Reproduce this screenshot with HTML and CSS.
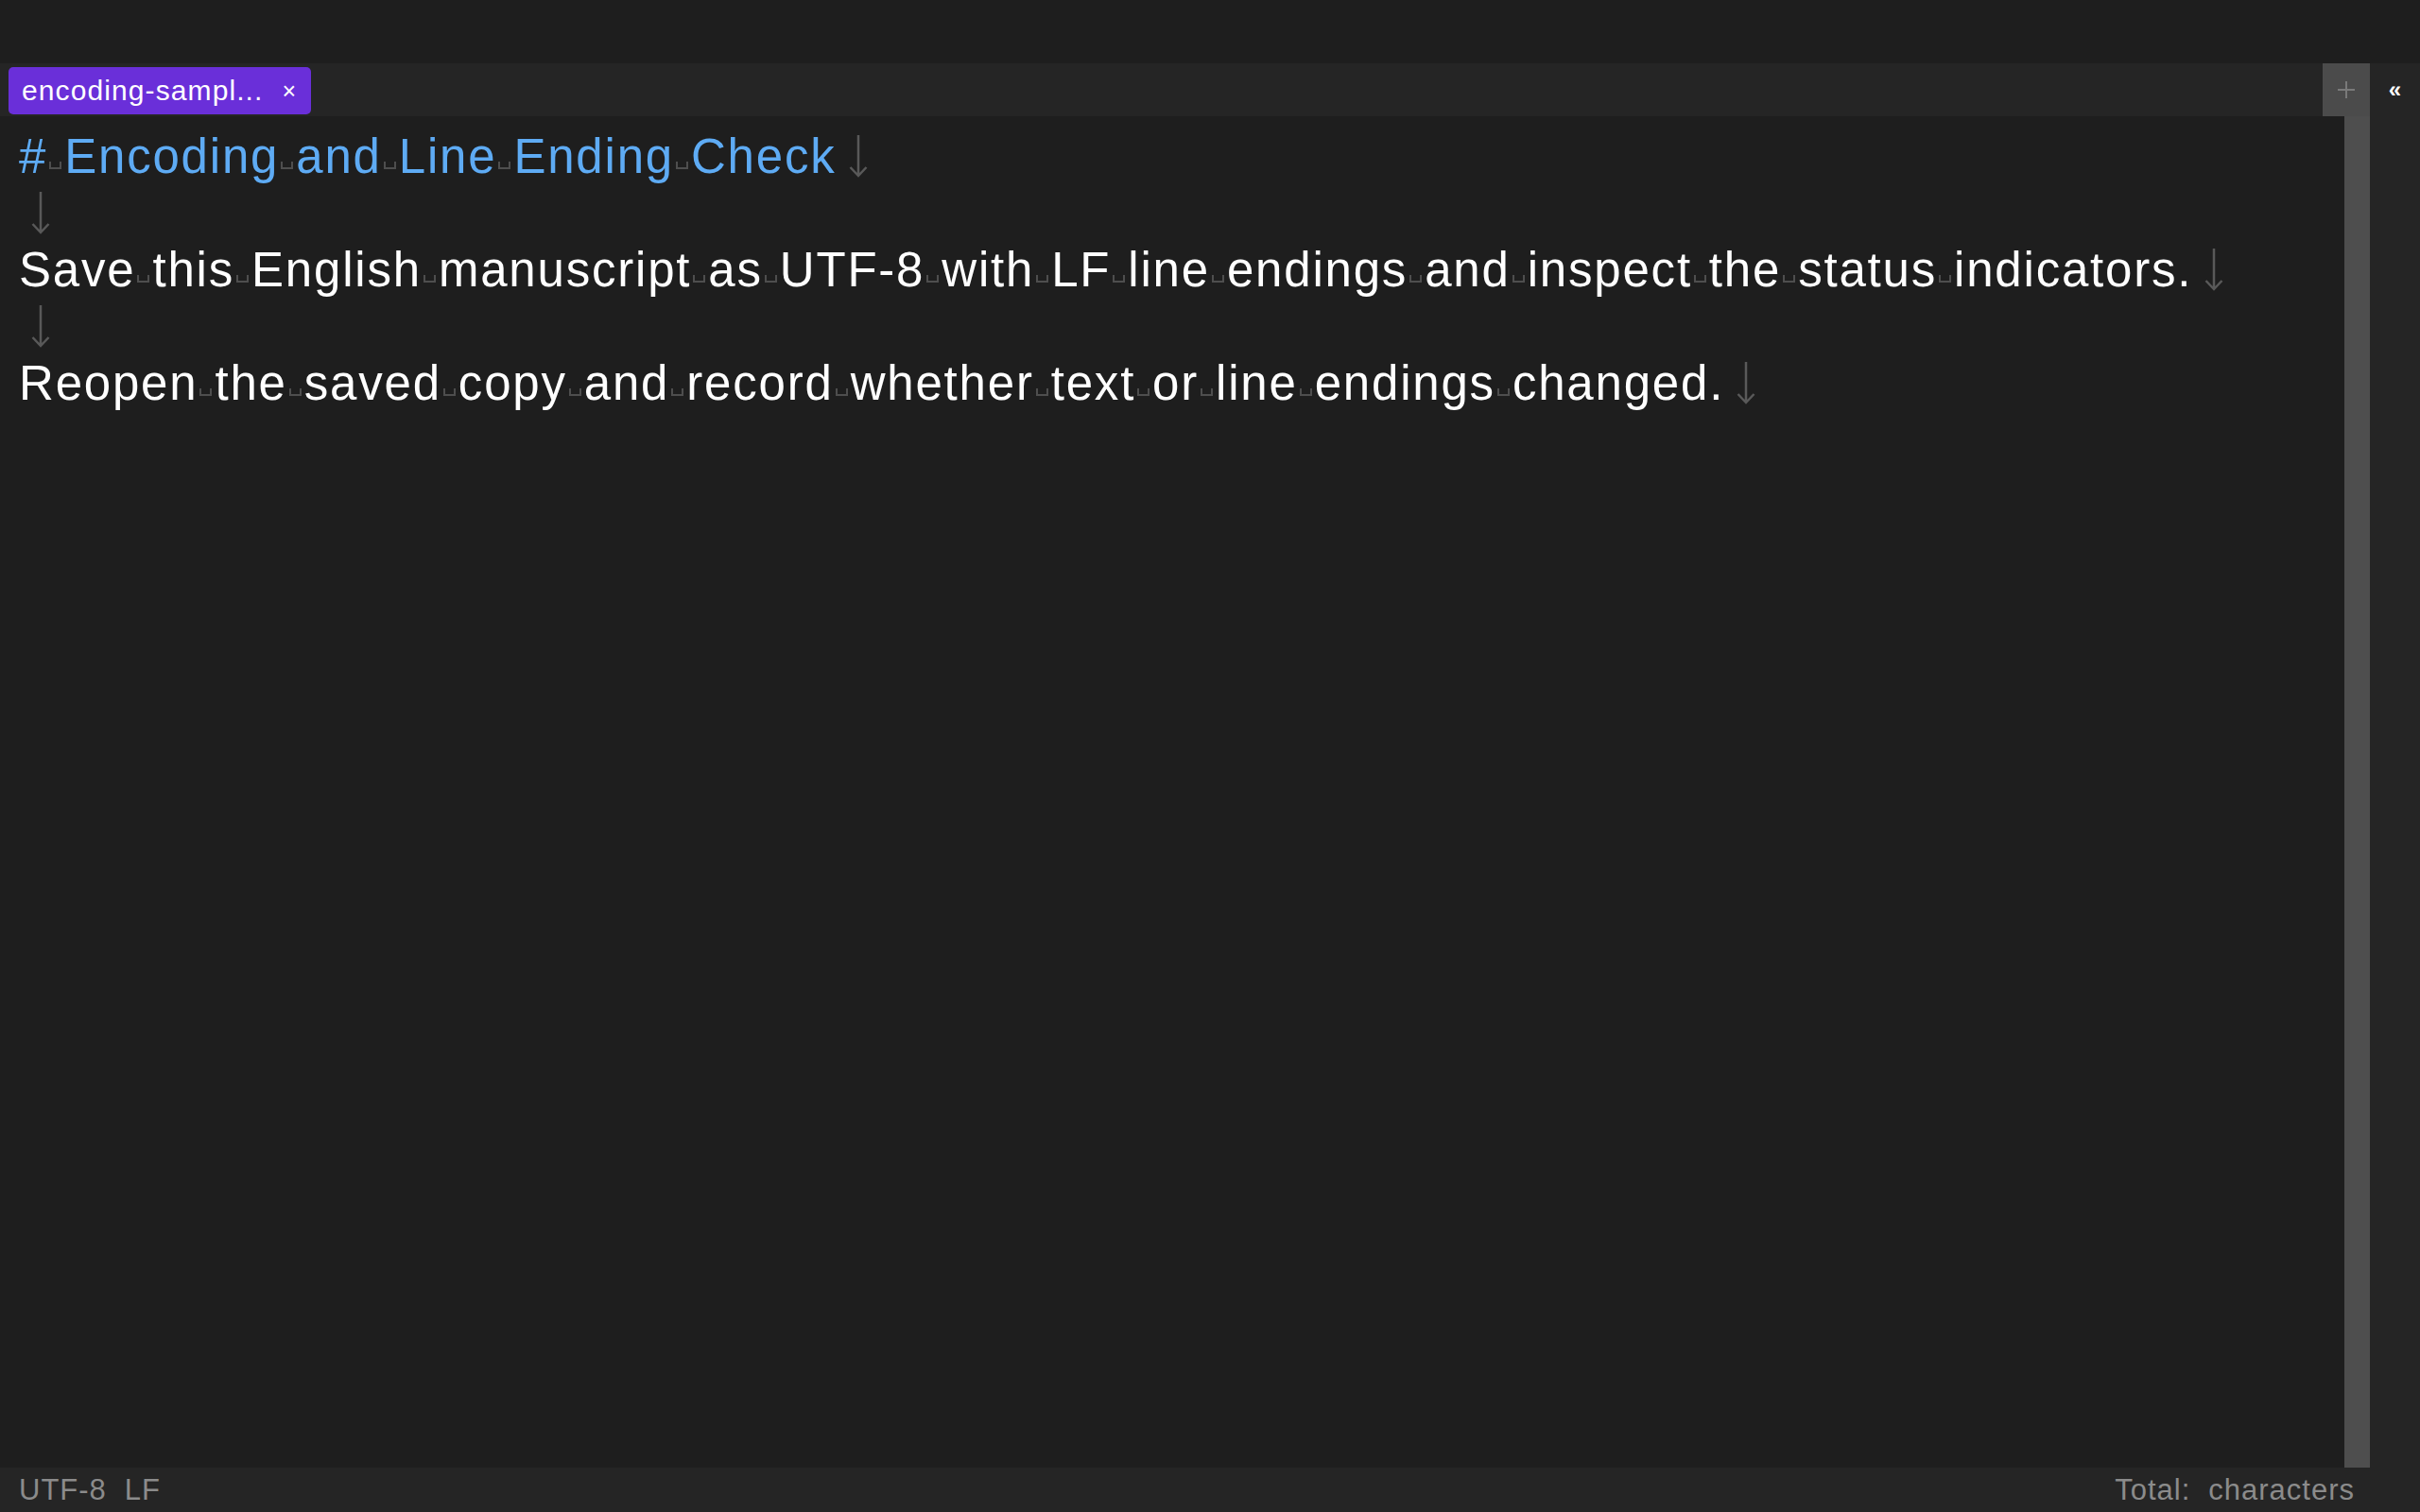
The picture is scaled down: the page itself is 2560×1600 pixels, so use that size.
FILE: index.html
```html
<!DOCTYPE html>
<html lang="en">
<head>
<meta charset="utf-8">
<title>encoding-sample</title>
<link rel="stylesheet" href="styles.css">
</head>
<body>
<div class="app">
  <div class="titlebar"></div>
  <div class="workspace">
    <div class="main">
      <div class="tabbar">
        <div class="tab">
          <span class="tab-title">encoding-sampl...</span>
          <span class="tab-close">×</span>
        </div>
        <div class="tab-add">
          <svg width="20" height="20" viewBox="0 0 20 20"><path d="M10 1V19M1 10H19" stroke="#7a7a7a" stroke-width="2" fill="none"/></svg>
        </div>
      </div>
      <div class="body">
        <div class="editor">
          <div class="line heading">#<span class="sp"></span>Encoding<span class="sp"></span>and<span class="sp"></span>Line<span class="sp"></span>Ending<span class="sp"></span>Check<svg class="nl" viewBox="0 0 22 46"><path d="M11 1V44M2.5 35L11 44L19.5 35"/></svg></div>
          <div class="line"><svg class="nl" viewBox="0 0 22 46"><path d="M11 1V44M2.5 35L11 44L19.5 35"/></svg></div>
          <div class="line">Save<span class="sp"></span>this<span class="sp"></span>English<span class="sp"></span>manuscript<span class="sp"></span>as<span class="sp"></span>UTF-8<span class="sp"></span>with<span class="sp"></span>LF<span class="sp"></span>line<span class="sp"></span>endings<span class="sp"></span>and<span class="sp"></span>inspect<span class="sp"></span>the<span class="sp"></span>status<span class="sp"></span>indicators.<svg class="nl" viewBox="0 0 22 46"><path d="M11 1V44M2.5 35L11 44L19.5 35"/></svg></div>
          <div class="line"><svg class="nl" viewBox="0 0 22 46"><path d="M11 1V44M2.5 35L11 44L19.5 35"/></svg></div>
          <div class="line">Reopen<span class="sp"></span>the<span class="sp"></span>saved<span class="sp"></span>copy<span class="sp"></span>and<span class="sp"></span>record<span class="sp"></span>whether<span class="sp"></span>text<span class="sp"></span>or<span class="sp"></span>line<span class="sp"></span>endings<span class="sp"></span>changed.<svg class="nl" viewBox="0 0 22 46"><path d="M11 1V44M2.5 35L11 44L19.5 35"/></svg></div>
        </div>
        <div class="scrollbar"></div>
      </div>
      <div class="statusbar">
        <div class="status-group">
          <span>UTF-8</span>
          <span>LF</span>
        </div>
        <div class="status-group">
          <span>Total:</span>
          <span>characters</span>
        </div>
      </div>
    </div>
    <div class="sidepanel">
      <div class="side-head">«</div>
    </div>
  </div>
</div>
</body>
</html>
```
FILE: styles.css
```css
* { box-sizing: border-box; }
html, body {
  margin: 0;
  padding: 0;
  width: 2560px;
  height: 1600px;
  overflow: hidden;
  background: #1e1e1e;
  font-family: "Liberation Sans", Arial, sans-serif;
}
.app {
  display: flex;
  flex-direction: column;
  width: 2560px;
  height: 1600px;
}
.titlebar {
  height: 67px;
  background: #1e1e1e;
  flex: none;
}
.workspace {
  flex: 1;
  display: flex;
  min-height: 0;
}
.main {
  flex: 1;
  display: flex;
  flex-direction: column;
  min-width: 0;
}
.tabbar {
  height: 56px;
  flex: none;
  background: #252525;
  display: flex;
  align-items: flex-start;
  padding-left: 9px;
}
.tab {
  margin-top: 4px;
  height: 50px;
  width: 320px;
  background: #6a2fd9;
  border-radius: 5px;
  display: flex;
  align-items: center;
  padding: 0 14px 0 14px;
  color: #ffffff;
}
.tab-title {
  font-size: 30px;
  line-height: 50px;
  letter-spacing: 1.1px;
  white-space: nowrap;
}
.tab-close {
  margin-left: auto;
  font-size: 25px;
  line-height: 50px;
  padding-right: 2px;
}
.tab-add {
  margin-left: auto;
  width: 50px;
  height: 56px;
  background: #4b4b4b;
  display: flex;
  align-items: center;
  justify-content: center;
}
.body {
  flex: 1;
  display: flex;
  min-height: 0;
}
.editor {
  flex: 1;
  background: #1e1e1e;
  padding: 13px 0 0 20px;
  color: #ffffff;
  font-size: 51px;
  line-height: 60px;
  letter-spacing: 1.8px;
  white-space: nowrap;
  overflow: hidden;
}
.line {
  height: 60px;
}
.heading {
  color: #5eabf4;
}
.sp {
  display: inline-block;
  width: 13px;
  height: 8px;
  margin: 0 3px 0 2px;
  border: 2px solid #4e4e4e;
  border-top: none;
  vertical-align: 4px;
}
.nl {
  display: inline-block;
  width: 22px;
  height: 46px;
  margin-left: 12px;
  vertical-align: -5px;
  fill: none;
  stroke: #595959;
  stroke-width: 2.5;
}
.scrollbar {
  width: 27px;
  flex: none;
  background: #4e4e4e;
}
.statusbar {
  height: 47px;
  flex: none;
  background: #252525;
  display: flex;
  justify-content: space-between;
  align-items: center;
  padding: 0 16px 0 20px;
  color: #8b8b8b;
  font-size: 31px;
  line-height: 47px;
  letter-spacing: 1px;
}
.status-group {
  display: flex;
  gap: 19px;
}
.sidepanel {
  width: 53px;
  flex: none;
  background: #252525;
}
.side-head {
  height: 56px;
  display: flex;
  align-items: center;
  justify-content: center;
  color: #ffffff;
  font-weight: bold;
  font-size: 24px;
}
```
